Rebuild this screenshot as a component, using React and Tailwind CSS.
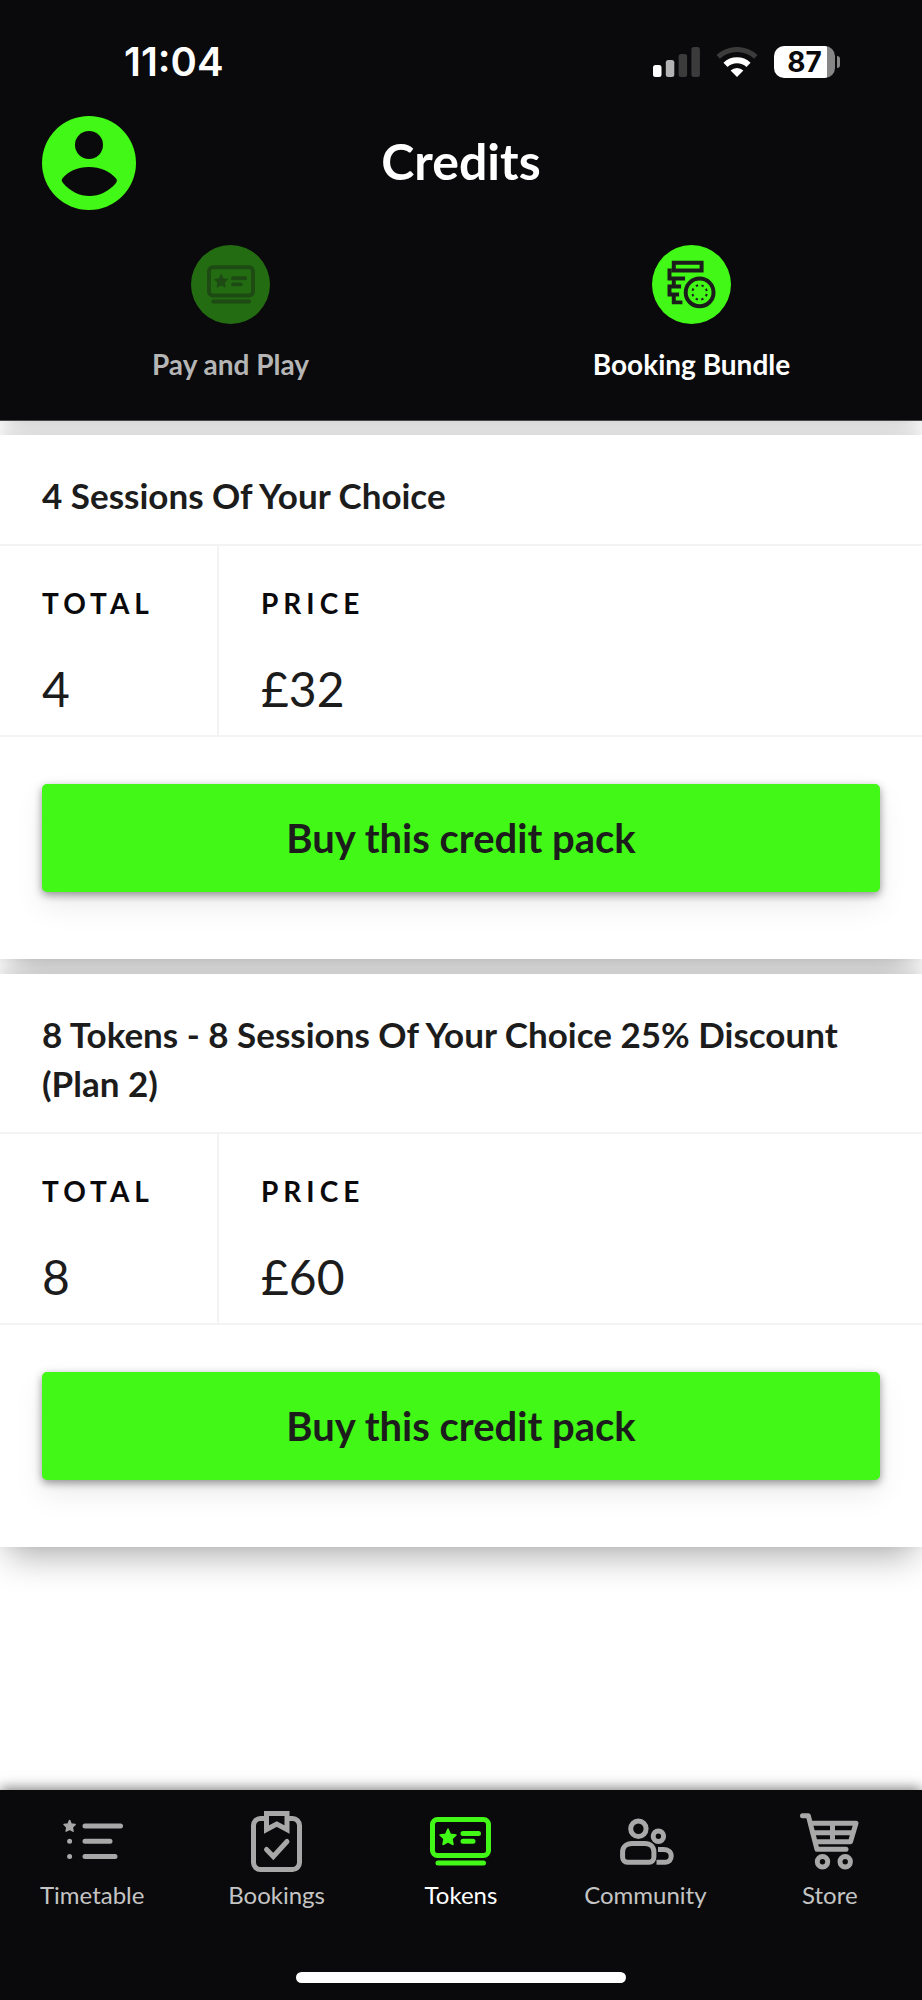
import { useState } from "react";

const STAR = "M0 -8 L2.3 -2.8 L8 -2.1 L4 1.8 L5 7.500 L0 4.800 L-5 7.500 L-4 1.800 L-8 -2.100 L-2.300 -2.800 Z";

function TicketIcon({ className }) {
  return (
    <svg viewBox="0 0 61 49" className={className} fill="none" stroke="currentColor" strokeWidth="5" strokeLinecap="round">
      <rect x="2.5" y="2.5" width="56" height="36" rx="5" />
      <path d="M33 16.5h15.500M33 24.300h10M8 46h45.500" />
      <path d={STAR} transform="translate(18 20)" fill="currentColor" strokeWidth="1.500" strokeLinejoin="round" />
    </svg>
  );
}

function CoinsIcon({ className }) {
  return (
    <svg viewBox="0 0 147 148" className={className} fill="none" stroke="currentColor" strokeWidth="12">
      <path d="M20 8H104V32H20Z" />
      <path d="M14 32H7V56H54M20 56V80M42 80H7V104H36M20 104V128H46" />
      <circle cx="98" cy="98" r="42" />
      <circle cx="98" cy="98" r="22" strokeWidth="6" strokeDasharray="7 10.280" strokeDashoffset="-5" />
    </svg>
  );
}

function TimetableIcon() {
  return (
    <svg viewBox="0 0 61 61" className="size-[61px]" fill="none" stroke="currentColor" strokeWidth="5" strokeLinecap="round">
      <path d="M23 15h35.500M23 30.300h25M23 45.600h30" />
      <path d={STAR} transform="translate(7.600 15) scale(.7)" fill="currentColor" strokeWidth="2" strokeLinejoin="round" />
      <path d="M7.600 30.300h.01M7.600 45.600h.01" />
    </svg>
  );
}

function BookingsIcon() {
  return (
    <svg viewBox="0 0 61 61" className="size-[61px]" fill="none" stroke="currentColor" strokeWidth="5">
      <rect x="7.500" y="7.500" width="46" height="51" rx="7" />
      <path d="M20.500 2.500H41V18.500L30.750 13L20.500 18.500Z" fill="#0a0a0c" />
      <path d="M20.500 38.500L27.300 45.500L41 30.500" strokeLinecap="round" />
    </svg>
  );
}

function TokensIcon() {
  return (
    <span className="flex size-[61px] items-center justify-center text-[#41f816]">
      <TicketIcon className="h-[49px] w-[61px]" />
    </span>
  );
}

function CommunityIcon() {
  return (
    <svg viewBox="0 0 61 61" className="size-[61px]" fill="none" stroke="currentColor" strokeWidth="5">
      <circle cx="23.400" cy="17.700" r="7.700" />
      <path d="M17 32.500H30C35.500 32.500 38.900 36 38.900 41V46C38.900 49 37 51.200 34 51.200H12.500C9.500 51.200 7.600 49 7.600 46V41C7.600 36 11.500 32.500 17 32.500Z" />
      <circle cx="43.400" cy="25.300" r="5.200" />
      <path d="M43 38.500H48.500C53 38.500 56.200 41 56.200 45C56.200 48.800 54 51.200 50.500 51.200H41.500" />
    </svg>
  );
}

function StoreIcon() {
  return (
    <svg viewBox="0 0 61 61" className="size-[61px]" fill="none" stroke="currentColor" strokeWidth="5" strokeLinecap="round" strokeLinejoin="round">
      <path d="M3.500 4.700H9.300L18 38.300H47" />
      <path d="M11.500 12.300H57L51.500 30.700H16.500M14 21.700H53M33.500 12.300V30.700" />
      <circle cx="23.500" cy="50.700" r="5.200" />
      <circle cx="46.200" cy="50.700" r="5.200" />
    </svg>
  );
}

function StatusBar() {
  return (
    <div className="flex h-[116px] items-center justify-between pt-2 pr-[82px] pl-[124px] font-['Inter',sans-serif]">
      <span className="text-[40px] leading-[48px] font-semibold">11:04</span>
      <div className="flex items-center">
        <svg viewBox="0 0 47 30" className="mr-4 h-[30px] w-[47px]">
          <rect x="0" y="18" width="8.500" height="12" rx="2.500" fill="#fff" />
          <rect x="12.800" y="13" width="8.500" height="17" rx="2.500" fill="#b3b3b3" />
          <rect x="25.600" y="7" width="8.500" height="23" rx="2.500" fill="#3b3b3b" />
          <rect x="38.400" y="0" width="8.500" height="30" rx="2.500" fill="#3b3b3b" />
        </svg>
        <svg viewBox="0 0 42 30" className="mr-4 h-[30px] w-[42px]" fill="none">
          <path d="M2.200 9.900A27.500 27.500 0 0 1 39.800 9.900" stroke="#3b3b3b" strokeWidth="5" />
          <path d="M9.500 17.900A16.700 16.700 0 0 1 32.500 17.900" stroke="#fff" strokeWidth="6" />
          <path d="M21 30L14.600 23.500A9.300 9.300 0 0 1 27.400 23.500Z" fill="#fff" />
        </svg>
        <span className="flex h-8 w-[61px] items-center justify-center rounded-[10px] bg-linear-to-r from-white from-87% to-[#868686] to-87% text-[28px] leading-8 font-bold text-[#0a0a0c]">
          87
        </span>
        <span className="ml-0.5 h-3 w-[3px] rounded-r-full bg-[#868686]" />
      </div>
    </div>
  );
}

const tabs = [
  { id: "pay", label: "Pay and Play", icon: <TicketIcon className="h-[39px] w-[48px]" /> },
  { id: "bundle", label: "Booking Bundle", icon: <CoinsIcon className="size-[49px]" /> },
];

const packs = [
  { title: "4 Sessions Of Your Choice", total: 4, price: "£32" },
  { title: "8 Tokens - 8 Sessions Of Your Choice 25% Discount (Plan 2)", total: 8, price: "£60" },
];

const navItems = [
  { label: "Timetable", icon: <TimetableIcon /> },
  { label: "Bookings", icon: <BookingsIcon /> },
  { label: "Tokens", icon: <TokensIcon />, active: true },
  { label: "Community", icon: <CommunityIcon /> },
  { label: "Store", icon: <StoreIcon /> },
];

function PackCard({ pack }) {
  return (
    <section className="relative bg-white pb-[67px] shadow-[0_18px_32px_-8px_rgba(0,0,0,0.3),0_-4px_12px_rgba(0,0,0,0.09)]">
      <h2 className="border-b-2 border-[#f3f3f3] px-[42px] pt-9 pb-6 text-[35px] leading-[49px] font-bold">{pack.title}</h2>
      <table className="w-full border-b-2 border-[#f3f3f3] text-left">
        <thead>
          <tr className="text-[28px] leading-[42px] tracking-[5px] text-[#0a0a0c]">
            <th className="w-[218px] border-r-2 border-[#f3f3f3] pt-9 pb-8 pl-[42px] font-bold">TOTAL</th>
            <th className="pt-9 pb-8 pl-[42px] font-bold">PRICE</th>
          </tr>
        </thead>
        <tbody>
          <tr className="text-[48px] leading-[66px]">
            <td className="border-r-2 border-[#f3f3f3] pb-[13px] pl-[42px]">{pack.total}</td>
            <td className="pb-[13px] pl-[42px]">{pack.price}</td>
          </tr>
        </tbody>
      </table>
      <div className="px-[42px] pt-[47px]">
        <button className="h-[108px] w-full rounded-[5px] bg-[#41f816] text-[40px] leading-[48px] font-bold shadow-[0_3px_8px_rgba(0,0,0,0.4),0_14px_30px_rgba(0,0,0,0.08)]">
          Buy this credit pack
        </button>
      </div>
    </section>
  );
}

export default function App() {
  const [tab, setTab] = useState("bundle");

  return (
    <div className="flex min-h-screen flex-col bg-white font-['Lato',sans-serif] text-[#1c1c1c]">
      <header className="border-b border-[#4a4a4a] bg-[#0a0a0c] pb-[38px] text-white shadow-[0_8px_24px_-4px_rgba(0,0,0,0.24)]">
        <StatusBar />
        <div className="grid grid-cols-3 items-center px-[42px]">
          <button aria-label="Profile" className="size-[94px]">
            <svg viewBox="0 0 94 94">
              <circle cx="47" cy="47" r="47" fill="#41f816" />
              <circle cx="47" cy="29" r="14" fill="#0a0a0c" />
              <path d="M20 63C26 55 36 51 47 51S68 55 74.500 63Q75.500 65 74 67C67 75.500 57 80 47.500 80S28 75.500 21 67Q19 65 20 63Z" fill="#0a0a0c" />
            </svg>
          </button>
          <h1 className="pb-1 text-center text-[50px] leading-[58px] font-bold">Credits</h1>
        </div>
        <div className="grid grid-cols-2 pt-[35px]">
          {tabs.map((t) => (
            <button
              key={t.id}
              onClick={() => setTab(t.id)}
              className={`flex flex-col items-center gap-[22px] ${tab === t.id ? "text-white" : "text-[#b5b5b5]"}`}
            >
              <span
                className={`flex size-[79px] items-center justify-center rounded-full ${
                  tab === t.id ? "bg-[#41f816] text-[#1c1c1c]" : "bg-[#236c12] text-[#1e4b14]"
                }`}
              >
                {t.icon}
              </span>
              <span className="text-[28px] leading-9 font-bold">{t.label}</span>
            </button>
          ))}
        </div>
      </header>

      <main className="flex flex-1 flex-col gap-[15px] pt-[14px] pb-12">
        {packs.map((p) => (
          <PackCard key={p.title} pack={p} />
        ))}
      </main>

      <nav className="sticky bottom-0 bg-[#0a0a0c] pt-[21px] pb-[17px] shadow-[0_-2px_12px_rgba(0,0,0,0.5)]">
        <div className="grid grid-cols-5">
          {navItems.map((n) => (
            <a key={n.label} href="#" className="flex flex-col items-center gap-2 text-[#a8a8a8]">
              {n.icon}
              <span className={`text-[24px] leading-[30px] ${n.active ? "text-white" : "text-[#c4c4c4]"}`}>{n.label}</span>
            </a>
          ))}
        </div>
        <div className="mx-auto mt-[62px] h-[11px] w-[330px] rounded-full bg-white" />
      </nav>
    </div>
  );
}
